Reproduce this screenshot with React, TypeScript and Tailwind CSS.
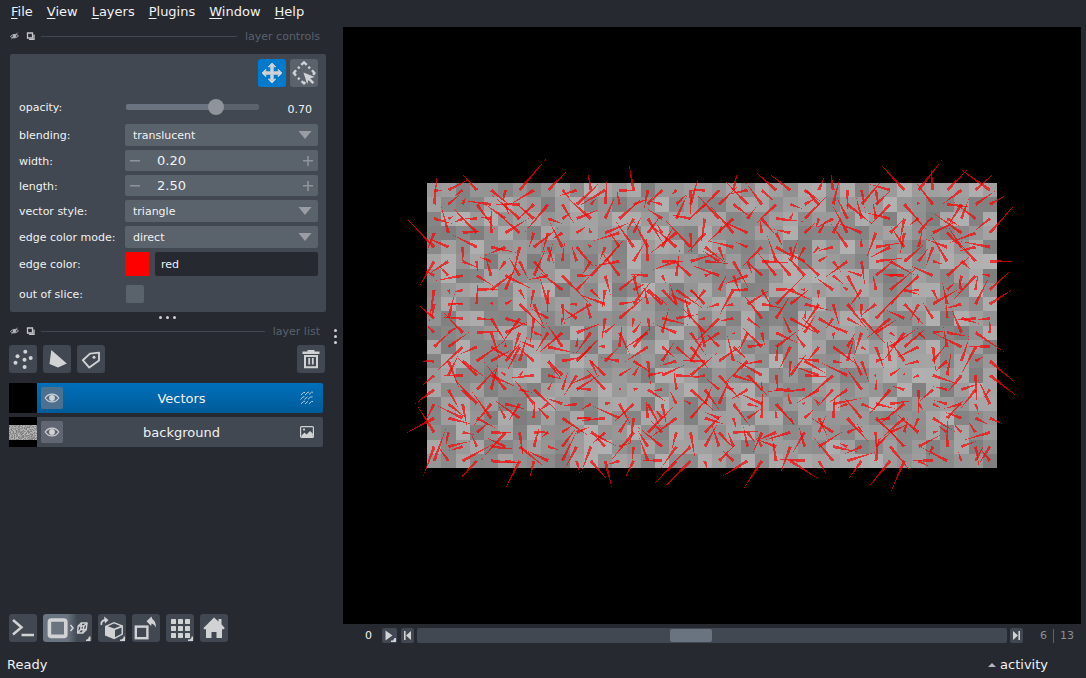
import React, { useState } from 'react';

const COLS = 40;
const ROWS = 20;
const CELL = 14.25;

function makeRandom(seed: number) {
  let s = seed;
  return () => {
    s = (s + 0x6d2b79f5) | 0;
    let t = Math.imul(s ^ (s >>> 15), 1 | s);
    t = (t + Math.imul(t ^ (t >>> 7), 61 | t)) ^ t;
    return ((t ^ (t >>> 14)) >>> 0) / 4294967296;
  };
}

// vectors along the border of the grid, [dx, dy]
const top = [
  [11, 1], [21, -11], [-8, 6], [-17, -19], [21, 17], [-3, 14], [27, -32], [-25, 15], [20, -20], [8, 9],
  [-18, 6], [-3, -18], [-28, 17], [20, 1], [-5, -28], [-4, 20], [-14, 14], [-5, 5], [0, 26], [-18, 0],
  [-19, 20], [4, -18], [-19, 4], [14, 13], [-19, -17], [-22, -17], [17, 12], [6, -15], [-2, -17], [0, 20],
  [3, 18], [2, 16], [-21, -6], [-24, -26], [24, -31], [-2, -24], [22, -22], [-20, 15], [20, -18], [-31, -22],
];
const bottom = [
  [12, -33], [-10, -14], [31, -17], [-19, 20], [27, 2], [15, 2], [-15, 29], [-4, 17], [-23, -11], [14, -29],
  [3, 12], [19, 22], [7, 28], [-13, 4], [-9, 18], [-9, -24], [-25, -1], [-23, 24], [-31, 31], [2, 8],
  [16, -16], [-13, -12], [-28, 17], [-19, 29], [-4, -24], [31, 20], [-30, -2], [8, 14], [-20, -24], [29, -9],
  [-13, 18], [3, -24], [-23, 28], [-14, 32], [11, 6], [-26, -1], [-27, -14], [-3, -9], [9, -17], [-8, -10],
];
const left = [
  [11, 1], [3, -30], [18, 5], [-8, 20], [-26, -27], [-16, 27], [-9, -5], [-5, 33], [-2, 14], [-15, -13],
  [-8, -8], [16, -15], [-14, 0], [-13, 11], [-20, 15], [-9, 18], [-30, 16], [-17, -27], [-11, 30], [12, -33],
];
const right = [
  [-31, -22], [16, -9], [-15, 12], [24, -27], [-30, -6], [24, 0], [-10, -2], [23, -21], [23, -15], [-16, 2],
  [0, -14], [-27, -1], [26, 22], [30, 23], [-6, 8], [-13, -27], [13, 6], [-27, 8], [-12, 19], [-8, -10],
];

const rand = makeRandom(11);
const cells: { x: number; y: number; fill: string }[] = [];
const triangles: string[] = [];

for (let r = 0; r < ROWS; r++) {
  for (let c = 0; c < COLS; c++) {
    const g = Math.round(126 + rand() * 52);
    cells.push({ x: c * CELL, y: r * CELL, fill: `rgb(${g},${g},${g})` });

    let [dx, dy] = [(rand() - 0.5) * 58, (rand() - 0.5) * 58];
    if (r === 0) [dx, dy] = top[c];
    else if (r === ROWS - 1) [dx, dy] = bottom[c];
    else if (c === 0) [dx, dy] = left[r];
    else if (c === COLS - 1) [dx, dy] = right[r];

    const len = Math.hypot(dx, dy) || 1;
    const nx = (-dy / len) * 1.6;
    const ny = (dx / len) * 1.6;
    const x = (c + 0.5) * CELL;
    const y = (r + 0.5) * CELL;
    triangles.push(`${x + nx},${y + ny} ${x - nx},${y - ny} ${x + dx},${y + dy}`);
  }
}

const noise: { x: number; y: number; fill: string }[] = [];
for (let y = 0; y < 15; y++) {
  for (let x = 0; x < 28; x++) {
    const g = Math.round(120 + rand() * 70);
    noise.push({ x, y, fill: `rgb(${g},${g},${g})` });
  }
}

function Viewer() {
  return (
    <svg viewBox="0 0 738 597" className="block h-full w-full" shapeRendering="crispEdges" role="img" aria-label="canvas">
      <g transform="translate(84 156)">
        {cells.map((c, i) => (
          <rect key={i} x={c.x} y={c.y} width={CELL} height={CELL} fill={c.fill} />
        ))}
        {triangles.map((p, i) => (
          <polygon key={i} points={p} fill="#ff0000" fillOpacity={0.7} />
        ))}
      </g>
    </svg>
  );
}

function Corner() {
  return <path d="M27 22.5v4.5h-5v-1.5h1.5l2-1.5v-1.5z" fill="#d1d2d4" />;
}

function DockTitle({ title }: { title: string }) {
  return (
    <div className="flex h-[18px] items-center pl-[10px] pr-[13px]">
      <button aria-label={`hide ${title}`} className="mr-[7px]">
        <svg width="9" height="9" viewBox="0 0 9 9" fill="none" stroke="#b5b7ba">
          <path d="M0.5 4.6C2.5 1.8 6.5 1.8 8.5 3.8C6.5 6.4 2.5 6.4 0.5 4.6z" strokeWidth="1" />
          <circle cx="4.5" cy="4.1" r="1.4" fill="#b5b7ba" />
          <path d="M1.5 6.8L7.5 1" strokeWidth="1" />
        </svg>
      </button>
      <button aria-label={`float ${title}`} className="mr-[6px]">
        <svg width="9" height="9" viewBox="0 0 9 9" fill="none" stroke="#c5c6c8">
          <path d="M1.5 1h5v5h-5z" strokeWidth="1.3" />
          <path d="M3 7.4h5V2.6" strokeWidth="1.3" />
        </svg>
      </button>
      <div className="h-px flex-1 bg-[#414851]" />
      <h2 className="ml-2 pt-0.5 text-[11px] leading-4 text-[#5a626c]">{title}</h2>
    </div>
  );
}

function Select({ id, options }: { id: string; options: string[] }) {
  return (
    <div className="grid">
      <select
        id={id}
        className="col-start-1 row-start-1 h-[22px] w-full appearance-none rounded-[2px] bg-[#5a626c] pt-0.5 pl-2 text-[11px] leading-4 text-[#f0f1f2] outline-none"
      >
        {options.map((o) => (
          <option key={o}>{o}</option>
        ))}
      </select>
      <svg width="14" height="8" viewBox="0 0 14 8" className="pointer-events-none col-start-1 row-start-1 mr-[6px] self-center justify-self-end">
        <path d="M0.5 0h13L7 8z" fill="#9a9ea4" />
      </svg>
    </div>
  );
}

function SpinBox({ id, initial }: { id: string; initial: number }) {
  const [value, setValue] = useState(initial);
  return (
    <div className="flex h-[21px] items-center rounded-[2px] bg-[#5a626c] px-[5px]">
      <button aria-label="decrease" onClick={() => setValue(Math.max(0, value - 0.1))}>
        <svg width="10" height="10" viewBox="0 0 10 10">
          <path d="M0 4h10v1.5H0z" fill="#8f949a" />
        </svg>
      </button>
      <input
        id={id}
        className="ml-[17px] min-w-0 flex-1 bg-transparent text-[13px] leading-4 text-[#f0f1f2] outline-none"
        value={value.toFixed(2)}
        onChange={(e) => setValue(Number(e.target.value) || 0)}
      />
      <button aria-label="increase" onClick={() => setValue(value + 0.1)}>
        <svg width="10" height="10" viewBox="0 0 10 10">
          <path d="M0 4h4.2V0h1.6v4H10v1.5H5.8V10H4.2V5.5H0z" fill="#8f949a" />
        </svg>
      </button>
    </div>
  );
}

function LayerControls() {
  const [opacity, setOpacity] = useState(0.7);
  const stop = opacity * 100;
  return (
    <section className="mt-[9px] ml-[10px] mr-[7px] rounded-[2px] bg-[#414851] pt-[5px] pr-2 pb-1 pl-[9px] text-[11px] leading-4 text-[#f0f1f2]">
      <div className="mb-[7px] flex justify-end gap-1">
        <button aria-label="pan/zoom" className="rounded-[3px] bg-[#007acc]">
          <svg width="28" height="28" viewBox="0 0 28 28">
            <path
              d="M14 4l3.8 3.8h-2.5v4.9h4.9v-2.5L24 14l-3.8 3.8v-2.5h-4.9v4.9h2.5L14 24l-3.8-3.8h2.5v-4.9H7.8v2.5L4 14l3.8-3.8v2.5h4.9V7.8h-2.5z"
              fill="#d1d2d4"
              stroke="#d1d2d4"
              strokeWidth="0.8"
              strokeLinejoin="round"
            />
          </svg>
        </button>
        <button aria-label="transform" className="rounded-[3px] bg-[#5a626c]">
          <svg width="28" height="28" viewBox="0 0 28 28">
            <g fill="none" stroke="#d1d2d4" strokeWidth="2.4">
              <path d="M11.3 5.8L14 3.4l2.7 2.4" />
              <path d="M6 11.2L3.8 14L6 16.6" />
              <path d="M22 11.2L24.4 14l-1.2 1.8" />
              <path d="M11.6 22.2l2.4 2.2 1.4-1.4" />
              <path d="M8 9.4l1.6-1.6M18.4 7.8L20 9.4M8 18.8l1.6 1.6" />
            </g>
            <path d="M13.4 13.4L24.8 18l-4.6 1.3 4 4-1.8 1.6-3.9-3.8-1.3 3.9z" fill="#d1d2d4" />
          </svg>
        </button>
      </div>
      <div className="grid grid-cols-[106px_minmax(0,1fr)] items-center gap-y-1 [&>label]:pt-0.5">
        <label htmlFor="opacity">opacity:</label>
        <div className="flex h-[26px] items-center">
          <input
            id="opacity"
            type="range"
            min="0"
            max="1"
            step="0.01"
            value={opacity}
            onChange={(e) => setOpacity(Number(e.target.value))}
            style={{ backgroundImage: `linear-gradient(to right, #6a7380 ${stop}%, #5a626c ${stop}%)` }}
            className="ml-px h-[6px] min-w-0 flex-1 appearance-none rounded-[2px] outline-none [&::-webkit-slider-thumb]:h-4 [&::-webkit-slider-thumb]:w-4 [&::-webkit-slider-thumb]:appearance-none [&::-webkit-slider-thumb]:rounded-full [&::-webkit-slider-thumb]:bg-[#8e9499]"
          />
          <output htmlFor="opacity" className="w-[59px] pt-1.5 pr-[6px] text-right">{opacity.toFixed(2)}</output>
        </div>

        <label htmlFor="blending">blending:</label>
        <Select id="blending" options={['translucent', 'opaque', 'additive', 'minimum']} />

        <label htmlFor="width">width:</label>
        <SpinBox id="width" initial={0.2} />

        <label htmlFor="length">length:</label>
        <SpinBox id="length" initial={2.5} />

        <label htmlFor="style">vector style:</label>
        <Select id="style" options={['triangle', 'line', 'arrow']} />

        <label htmlFor="mode">edge color mode:</label>
        <Select id="mode" options={['direct', 'cycle', 'colormap']} />

        <label htmlFor="color">edge color:</label>
        <div className="flex h-6 gap-[6px]">
          <button aria-label="pick edge color" className="w-6 bg-[#ff0000]" />
          <input
            id="color"
            defaultValue="red"
            className="min-w-0 flex-1 rounded-[2px] bg-[#262930] px-[6px] pt-0.5 text-[11px] text-[#f0f1f2] outline-none"
          />
        </div>

        <label htmlFor="slice">out of slice:</label>
        <div className="flex h-7 items-center">
          <input id="slice" type="checkbox" className="ml-px h-[18px] w-[18px] appearance-none rounded-[2px] bg-[#5a626c] checked:bg-[#007acc]" />
        </div>
      </div>
    </section>
  );
}

function IconButton({ label, children }: { label: string; children: React.ReactNode }) {
  return (
    <button aria-label={label} className="rounded-[3px] bg-[#414851]">
      <svg width="28" height="28" viewBox="0 0 28 28">
        {children}
      </svg>
    </button>
  );
}

function Eye() {
  return (
    <svg width="22" height="22" viewBox="0 0 22 22" fill="none" stroke="#d1d2d4" strokeWidth="1.2">
      <path d="M4.2 11C7.5 5.8 14.5 5.8 17.8 11C14.5 16.2 7.5 16.2 4.2 11z" />
      <circle cx="11" cy="11" r="2.9" fill="#d1d2d4" stroke="none" />
    </svg>
  );
}

function LayerList() {
  return (
    <section>
      <div className="mt-[5px] mr-2 ml-[9px] flex gap-[6px]">
        <IconButton label="new points layer">
          <g fill="#d1d2d4">
            <circle cx="16.3" cy="6.8" r="2" />
            <circle cx="8.5" cy="11.3" r="2" />
            <circle cx="15.5" cy="14.7" r="2" />
            <circle cx="21.7" cy="13" r="2" />
            <circle cx="6.5" cy="17.7" r="2" />
            <circle cx="15.6" cy="22" r="2" />
          </g>
        </IconButton>
        <IconButton label="new shapes layer">
          <path d="M8.3 5L23.8 18.6L15 22.4L6.5 19z" fill="#d1d2d4" />
        </IconButton>
        <IconButton label="new labels layer">
          <path d="M13 8.6L22 7.6L22 15.5L12.3 22.6L5.8 15.2z" fill="none" stroke="#d1d2d4" strokeWidth="1.9" strokeLinejoin="round" />
          <circle cx="17" cy="12.3" r="1.5" fill="#d1d2d4" />
        </IconButton>
        <div className="flex-1" />
        <IconButton label="delete selected layers">
          <path d="M5.5 6.5h5V5h7v1.5h5v2.4h-17z" fill="#d1d2d4" />
          <path d="M8 11h12v11.3H8z" fill="none" stroke="#d1d2d4" strokeWidth="2" />
          <path d="M12.2 13v6.5M15.8 13v6.5" stroke="#d1d2d4" strokeWidth="1.8" />
        </IconButton>
      </div>
      <ul className="mt-[10px] mr-[10px] ml-[9px] flex flex-col gap-1 text-[13px] leading-4 text-[#f0f1f2]">
        <li className="flex h-[30px] items-center rounded-r-[2px] bg-linear-to-b from-[#006fba] to-[#005c99]">
          <div className="h-full w-7 bg-black" />
          <button aria-label="toggle Vectors" className="ml-1 rounded-[2px] bg-[#4d708f]"><Eye /></button>
          <span className="flex-1 pt-0.5 text-center">Vectors</span>
          <svg width="14" height="14" viewBox="0 0 14 14" className="mr-[9px]" fill="none" stroke="#b4cadb" strokeWidth="1">
            <path d="M1 4L3.5 1.5H5M5 4L8 1.2H9M9 3.5L11.5 1.2H13" />
            <path d="M0.5 8.5L3 5.8H4.5M4.5 8.5L7.5 5.8M8 8.2L10.5 6H12.5" />
            <path d="M1 13L3.5 10.3H5M5 13L8 10.3M9 12.8L11.5 10.5H13" />
          </svg>
        </li>
        <li className="flex h-[30px] items-center rounded-r-[2px] bg-[#414851]">
          <div className="flex h-full w-7 items-center bg-black">
            <svg width="28" height="15" viewBox="0 0 28 15" shapeRendering="crispEdges">
              {noise.map((n, i) => (
                <rect key={i} x={n.x} y={n.y} width="1" height="1" fill={n.fill} />
              ))}
            </svg>
          </div>
          <button aria-label="toggle background" className="ml-1 rounded-[2px] bg-[#616673]"><Eye /></button>
          <span className="flex-1 pt-0.5 text-center">background</span>
          <svg width="14" height="12" viewBox="0 0 14 12" className="mr-[9px]">
            <rect x="0.6" y="0.6" width="12.8" height="10.8" rx="1" fill="none" stroke="#d1d2d4" strokeWidth="1.2" />
            <path d="M1.5 11V9.5L4.5 6.5L6.5 8.5L10 5L12.8 7.5V11z" fill="#d1d2d4" />
            <circle cx="4" cy="3.6" r="1.1" fill="#d1d2d4" />
          </svg>
        </li>
      </ul>
    </section>
  );
}

function ViewerButtons() {
  return (
    <div className="mt-auto mb-2 ml-[9px] flex gap-[6px]">
      <IconButton label="console">
        <path d="M4 6l8.5 7.3L4 20.5M12.5 21H25" fill="none" stroke="#d1d2d4" strokeWidth="2.5" />
      </IconButton>
      <button aria-label="toggle 2D/3D view" className="rounded-[3px] bg-linear-to-r from-[#6a7380] from-50% to-[#414851] to-70%">
        <svg width="49" height="28" viewBox="0 0 49 28">
          <rect x="6.4" y="6" width="16.4" height="16.4" rx="2" fill="none" stroke="#d1d2d4" strokeWidth="3.6" />
          <path d="M27.5 11l2.5 3-2.5 3" fill="none" stroke="#d1d2d4" strokeWidth="1.6" />
          <g fill="none" stroke="#d1d2d4" strokeWidth="1.5" strokeLinejoin="round">
            <path d="M35.2 12h5.6l-1 7h-5.2z" />
            <path d="M38.4 9h5.6l-.8 6.6h-5.4z" />
            <path d="M35.2 12L38.4 9M40.8 12L44 9M39.8 19l3.4-3.4M34.6 19l3.2-3.4" />
          </g>
          <path d="M47.5 22.5V27H43v-1.2l2-.8 1-2.5z" fill="#d1d2d4" />
        </svg>
      </button>
      <IconButton label="roll dimensions">
        <path d="M7 12L16 8L25 11.5v9L16.2 25.2L7 21.5z" fill="#d1d2d4" />
        <path d="M17 16L23.5 13.4v6.4l-6.5 3.4z" fill="#414851" />
        <path d="M9.8 12.3L16 9.6L22.4 11.9L16.2 14.4z" fill="#414851" />
        <path d="M3.5 11C2.8 8.5 4 6.4 7.2 6" fill="none" stroke="#d1d2d4" strokeWidth="1.8" />
        <path d="M6 2.6L10.5 6L7 9.4z" fill="#d1d2d4" />
        <Corner />
      </IconButton>
      <IconButton label="transpose">
        <rect x="3.8" y="12.6" width="11.6" height="11.6" fill="none" stroke="#d1d2d4" strokeWidth="2.4" />
        <path d="M14.5 7.2L19.5 2.5L20.3 5C22.5 6.2 24 9 24 13.5C22.3 10.8 21.5 10 19.5 9.5L19.2 12z" fill="#d1d2d4" />
      </IconButton>
      <IconButton label="toggle grid">
        <g fill="#d1d2d4">
          {[5, 12, 19].map((y) =>
            [5, 12, 19].map((x) => <rect key={`${x}-${y}`} x={x} y={y} width="5" height="5" rx="0.6" />)
          )}
        </g>
        <Corner />
      </IconButton>
      <IconButton label="home">
        <path d="M14 3.5l4.5 4V5h3v5.2l3.2 3.8-.7 1.2h-2V24h-5.5v-6h-5v6H6V15.2H4L3.5 14z" fill="#d1d2d4" />
      </IconButton>
    </div>
  );
}

function DimsSlider() {
  const [frame, setFrame] = useState(6);
  return (
    <div className="mr-[6px] flex h-[26px] items-center pb-[3px] text-[11px] leading-4">
      <label htmlFor="frame" className="w-[39px] pr-[10px] text-right text-[#f0f1f2]">0</label>
      <button aria-label="play" className="rounded-[2px] bg-[#414851]">
        <svg width="15" height="15" viewBox="0 0 15 15" fill="#d1d2d4">
          <path d="M3.5 2.5L10.5 7.5L3.5 12.5z" />
          <path d="M14 10v4H9v-1.5h2l1.5-2.5z" />
        </svg>
      </button>
      <button aria-label="previous frame" className="ml-1 rounded-[2px] bg-[#414851]" onClick={() => setFrame(Math.max(0, frame - 1))}>
        <svg width="13" height="15" viewBox="0 0 13 15" fill="#d1d2d4">
          <path d="M3 3h1.6v9H3zM10 3v9L5 7.5z" />
        </svg>
      </button>
      <input
        id="frame"
        type="range"
        min="0"
        max="13"
        value={frame}
        onChange={(e) => setFrame(Number(e.target.value))}
        className="ml-[3px] h-[15px] min-w-0 flex-1 appearance-none rounded-[2px] bg-[#414851] outline-none [&::-webkit-slider-thumb]:h-[13px] [&::-webkit-slider-thumb]:w-[42px] [&::-webkit-slider-thumb]:appearance-none [&::-webkit-slider-thumb]:rounded-[2px] [&::-webkit-slider-thumb]:bg-[#6a7380]"
      />
      <button aria-label="next frame" className="ml-[3px] rounded-[2px] bg-[#414851]" onClick={() => setFrame(Math.min(13, frame + 1))}>
        <svg width="13" height="15" viewBox="0 0 13 15" fill="#d1d2d4">
          <path d="M8.4 3H10v9H8.4zM3 3v9l5-4.5z" />
        </svg>
      </button>
      <span className="w-[24px] text-right text-[#8c8f94]">{frame}</span>
      <div className="mx-[6px] h-[14px] w-px bg-[#5a626c]" />
      <span className="w-[20px] text-[#8c8f94]">13</span>
    </div>
  );
}

export default function App() {
  const menus = ['File', 'View', 'Layers', 'Plugins', 'Window', 'Help'];
  return (
    <div className="flex h-screen flex-col bg-[#262930] font-['DejaVu_Sans',sans-serif] text-[#f0f1f2]">
      <nav className="flex h-[27px] items-start gap-[14px] pt-1 pl-[11px] text-[13px] leading-4">
        {menus.map((m) => (
          <button key={m}>
            <span className="underline underline-offset-2">{m[0]}</span>
            {m.slice(1)}
          </button>
        ))}
      </nav>

      <div className="flex min-h-0 flex-1">
        <aside className="flex w-[333px] shrink-0 flex-col">
          <DockTitle title="layer controls" />
          <LayerControls />
          <div className="flex h-[10px] items-center justify-center gap-1 pl-px">
            <i className="h-[3px] w-[3px] rounded-full bg-[#d1d2d4]" />
            <i className="h-[3px] w-[3px] rounded-full bg-[#d1d2d4]" />
            <i className="h-[3px] w-[3px] rounded-full bg-[#d1d2d4]" />
          </div>
          <DockTitle title="layer list" />
          <LayerList />
          <ViewerButtons />
        </aside>

        <div className="flex w-[10px] shrink-0 flex-col items-start justify-center gap-[3px] pb-1 pl-px">
          <i className="h-[3px] w-[3px] rounded-full bg-[#d1d2d4]" />
          <i className="h-[3px] w-[3px] rounded-full bg-[#d1d2d4]" />
          <i className="h-[3px] w-[3px] rounded-full bg-[#d1d2d4]" />
        </div>

        <main className="flex min-w-0 flex-1 flex-col">
          <div className="mr-[5px] min-h-0 flex-1 bg-black">
            <Viewer />
          </div>
          <DimsSlider />
        </main>
      </div>

      <footer className="flex h-7 items-center justify-between pt-0.5 pr-[38px] pl-[7px] text-[13px] leading-4">
        <span>Ready</span>
        <button className="flex items-center gap-1">
          <svg width="8" height="4" viewBox="0 0 8 4">
            <path d="M0 4L4 0l4 4z" fill="#b5b7ba" />
          </svg>
          activity
        </button>
      </footer>
    </div>
  );
}
